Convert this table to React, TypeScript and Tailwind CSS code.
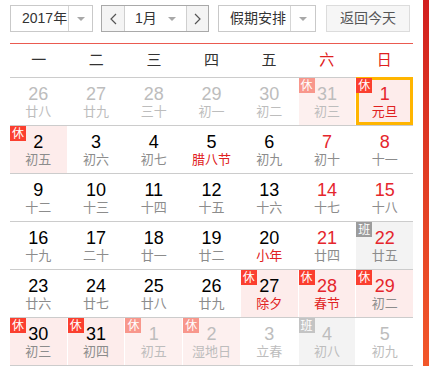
type Day = {
  n: number;
  lunar: string;
  out?: boolean;
  red?: boolean;
  lunarRed?: boolean;
  badge?: "休" | "班";
  today?: boolean;
};

const rows: Day[][] = [
  [
    { n: 26, lunar: "廿八", out: true },
    { n: 27, lunar: "廿九", out: true },
    { n: 28, lunar: "三十", out: true },
    { n: 29, lunar: "初一", out: true },
    { n: 30, lunar: "初二", out: true },
    { n: 31, lunar: "初三", out: true, badge: "休" },
    { n: 1, lunar: "元旦", red: true, lunarRed: true, badge: "休", today: true },
  ],
  [
    { n: 2, lunar: "初五", badge: "休" },
    { n: 3, lunar: "初六" },
    { n: 4, lunar: "初七" },
    { n: 5, lunar: "腊八节", lunarRed: true },
    { n: 6, lunar: "初九" },
    { n: 7, lunar: "初十", red: true },
    { n: 8, lunar: "十一", red: true },
  ],
  [
    { n: 9, lunar: "十二" },
    { n: 10, lunar: "十三" },
    { n: 11, lunar: "十四" },
    { n: 12, lunar: "十五" },
    { n: 13, lunar: "十六" },
    { n: 14, lunar: "十七", red: true },
    { n: 15, lunar: "十八", red: true },
  ],
  [
    { n: 16, lunar: "十九" },
    { n: 17, lunar: "二十" },
    { n: 18, lunar: "廿一" },
    { n: 19, lunar: "廿二" },
    { n: 20, lunar: "小年", lunarRed: true },
    { n: 21, lunar: "廿四", red: true },
    { n: 22, lunar: "廿五", red: true, badge: "班" },
  ],
  [
    { n: 23, lunar: "廿六" },
    { n: 24, lunar: "廿七" },
    { n: 25, lunar: "廿八" },
    { n: 26, lunar: "廿九" },
    { n: 27, lunar: "除夕", lunarRed: true, badge: "休" },
    { n: 28, lunar: "春节", red: true, lunarRed: true, badge: "休" },
    { n: 29, lunar: "初二", red: true, badge: "休" },
  ],
  [
    { n: 30, lunar: "初三", badge: "休" },
    { n: 31, lunar: "初四", badge: "休" },
    { n: 1, lunar: "初五", out: true, badge: "休" },
    { n: 2, lunar: "湿地日", out: true, badge: "休" },
    { n: 3, lunar: "立春", out: true },
    { n: 4, lunar: "初八", out: true, badge: "班" },
    { n: 5, lunar: "初九", out: true },
  ],
];

const weekdays = ["一", "二", "三", "四", "五", "六", "日"];

function Caret() {
  return (
    <span className="block h-0 w-0 border-x-[4px] border-t-[4px] border-x-transparent border-t-[#a8a8a8]" />
  );
}

function Chevron({ dir }: { dir: "left" | "right" }) {
  return (
    <svg width="7" height="12" viewBox="0 0 7 12">
      <polyline
        points={dir === "left" ? "6,1 1,6 6,11" : "1,1 6,6 1,11"}
        fill="none"
        stroke="#555"
        strokeWidth="1.2"
      />
    </svg>
  );
}

function Cell({ d }: { d: Day }) {
  const bg =
    d.badge === "休"
      ? d.out
        ? "bg-[#fdf0ef]"
        : "bg-[#fdeceb]"
      : d.badge === "班"
        ? "bg-[#f3f3f3]"
        : "";
  const numColor = d.out ? "text-[#bdbdbd]" : d.red ? "text-[#e5262d]" : "text-black";
  const lunarColor = d.out
    ? "text-[#bdbdbd]"
    : d.lunarRed
      ? "text-[#e02020]"
      : "text-[#8c8c8c]";
  const badgeBg =
    d.badge === "休"
      ? d.out
        ? "bg-[#f8978c]"
        : "bg-[#fb3f2f]"
      : d.out
        ? "bg-[#c4c4c4]"
        : "bg-[#9c9c9c]";

  return (
    <div className={`relative flex h-full flex-col items-center pt-[6px] ${bg}`}>
      {d.today && (
        <div className="absolute inset-x-0 top-[-1px] bottom-0 border-[3px] border-[#ffb500]" />
      )}
      {d.badge && (
        <span
          className={`absolute left-0 top-0 flex h-[15px] w-[16px] items-center justify-center text-[12px] leading-none text-white ${badgeBg}`}
        >
          {d.badge}
        </span>
      )}
      <span className={`relative text-[18px] leading-[20px] ${numColor}`}>{d.n}</span>
      <span className={`relative text-[13px] leading-[16px] ${lunarColor}`}>{d.lunar}</span>
    </div>
  );
}

export default function App() {
  return (
    <div
      className="flex h-[366px] w-[429px] overflow-hidden bg-white"
      style={{ fontFamily: '"Liberation Sans", Arial, "Noto Sans CJK SC", sans-serif' }}
    >
      <div className="w-[423px] shrink-0 px-[10px]">
        {/* toolbar */}
        <div className="flex h-[43px] items-start whitespace-nowrap pt-[5px] text-[14px] text-[#333]">
          <div className="flex h-[27px] w-[83px] items-stretch border border-[#c9c9c9]">
            <span className="flex flex-1 items-center pl-[11px]">2017年</span>
            <span className="flex w-[24px] shrink-0 items-center justify-center border-l border-[#d5d5d5]">
              <Caret />
            </span>
          </div>

          <div className="ml-[8px] flex h-[27px] w-[108px] items-stretch border border-[#a9a9a9]">
            <span className="flex w-[23px] items-center justify-center border-r border-[#cfcfcf] bg-[#f4f4f4]">
              <Chevron dir="left" />
            </span>
            <span className="flex flex-1 items-center justify-between pl-[10px] pr-[10px]">
              1月
              <Caret />
            </span>
            <span className="flex w-[22px] items-center justify-center border-l border-[#cfcfcf] bg-[#f4f4f4]">
              <Chevron dir="right" />
            </span>
          </div>

          <div className="ml-[9px] flex h-[27px] w-[98px] items-stretch border border-[#c9c9c9]">
            <span className="flex flex-1 items-center pl-[11px]">假期安排</span>
            <span className="flex w-[25px] shrink-0 items-center justify-center border-l border-[#d5d5d5]">
              <Caret />
            </span>
          </div>

          <div className="ml-[10px] flex h-[27px] w-[84px] items-center justify-center border border-[#dcdcdc] bg-[#f6f6f6] text-[#555]">
            返回今天
          </div>
        </div>

        {/* weekday header */}
        <div className="grid h-[35px] grid-cols-7 items-center border-t border-b border-t-[#ea5a50] border-b-[#cccccc] text-[15px]">
          {weekdays.map((w, i) => (
            <span
              key={w}
              className={`text-center ${i >= 5 ? "text-[#e02020]" : "text-[#333]"}`}
            >
              {w}
            </span>
          ))}
        </div>

        {/* days */}
        {rows.map((row, ri) => (
          <div
            key={ri}
            className="grid h-[48px] grid-cols-7 gap-x-px border-b border-[#cccccc]"
          >
            {row.map((d, ci) => (
              <Cell key={ci} d={d} />
            ))}
          </div>
        ))}
      </div>
      <div className="h-full w-[6px] shrink-0 bg-gradient-to-b from-[#d21f1f] to-[#f2572a]" />
    </div>
  );
}
